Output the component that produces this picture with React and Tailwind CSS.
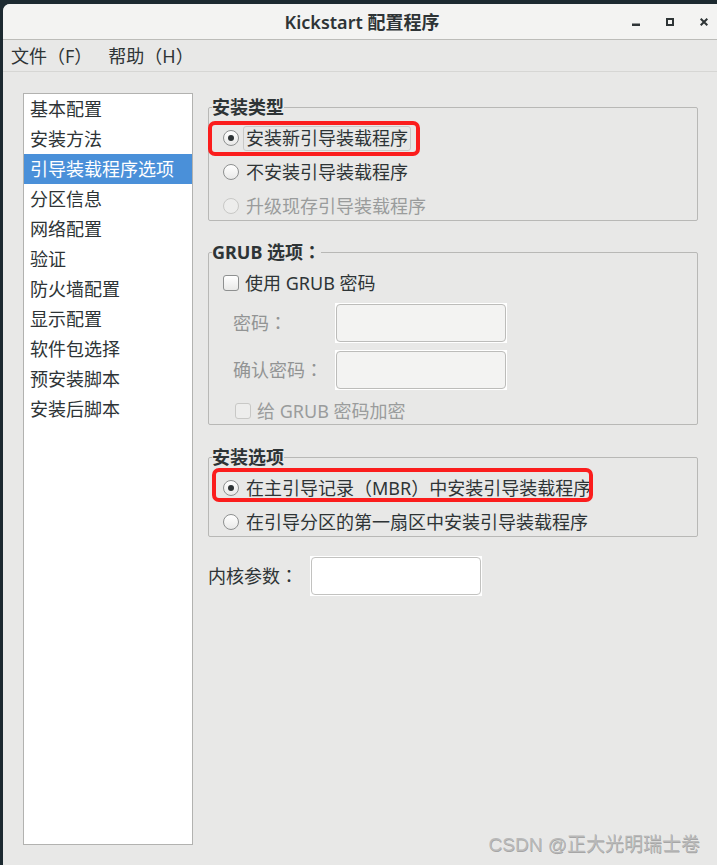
import React from "react";

const FONT = { fontFamily: '"Noto Sans", "Noto Sans CJK SC", sans-serif' };

function Colon() {
  return (
    <span style={{ fontFamily: '"Noto Sans CJK TC", sans-serif', lineHeight: 0 }}>：</span>
  );
}

function Radio({ checked, disabled }) {
  return (
    <span
      className={
        disabled
          ? "w-4 h-4 rounded-full border border-[#c8c8c6] bg-[#ededec] flex items-center justify-center shrink-0"
          : "w-4 h-4 rounded-full border border-[#8e9090] bg-linear-to-b from-[#ffffff] to-[#e9e9e8] flex items-center justify-center shrink-0"
      }
    >
      {checked && <span className="w-[6px] h-[6px] rounded-full bg-[#2e3436]" />}
    </span>
  );
}

function Check({ disabled }) {
  return (
    <span
      className={
        disabled
          ? "w-4 h-4 rounded-[3px] border border-[#c8c8c6] bg-[#ededec] shrink-0"
          : "w-4 h-4 rounded-[3px] border border-[#8e9090] bg-linear-to-b from-[#ffffff] to-[#e9e9e8] shrink-0"
      }
    />
  );
}

function RadioRow({ checked, disabled, focus, children }) {
  return (
    <div className="relative flex items-center h-[28px]">
      <Radio checked={checked} disabled={disabled} />
      <span
        className={
          focus
            ? "ml-[4px] px-[2px] leading-[23px] border border-[#c9c9c7] rounded-[3px] text-[#2e3436]"
            : disabled
            ? "ml-[4px] px-[2px] leading-[23px] border border-transparent text-[#9a9c9c]"
            : "ml-[4px] px-[2px] leading-[23px] border border-transparent text-[#2e3436]"
        }
      >
        {children}
      </span>
    </div>
  );
}

function Field({ legend, children, className }) {
  return (
    <fieldset className={"border border-[#b8b8b6] rounded-[2px] " + className}>
      <legend className="ml-[3px] font-bold text-[18px] leading-[24px] h-[24px] text-[#2e3436]">
        {legend}
      </legend>
      <div className="pl-[14px]">{children}</div>
    </fieldset>
  );
}

function TextBox({ white }) {
  return (
    <div className="w-[172px] h-[40px] bg-white p-px">
      <div
        className={
          white
            ? "h-full rounded-[4px] border border-[#c2c2c0] bg-white"
            : "h-full rounded-[4px] border border-[#bcbcba] bg-[#f3f3f2]"
        }
      />
    </div>
  );
}

const items = [
  "基本配置",
  "安装方法",
  "引导装载程序选项",
  "分区信息",
  "网络配置",
  "验证",
  "防火墙配置",
  "显示配置",
  "软件包选择",
  "预安装脚本",
  "安装后脚本",
];

export default function App() {
  return (
    <div
      className="relative w-[717px] h-[865px] bg-[#1c2930] pt-[4px] pl-[3px] overflow-hidden text-[18px] text-[#2e3436]"
      style={FONT}
    >
      <div className="flex flex-col h-full bg-[#e8e8e7] rounded-tl-[7px] overflow-hidden">
        {/* title bar */}
        <div className="h-[36px] shrink-0 bg-[#f3f3f2] border-b border-[#bcbcb9] grid grid-cols-[1fr_auto_1fr] items-center">
          <div />
          <div className="pl-[4px] font-semibold text-[18px] leading-[24px] text-[#2e3436]">
            Kickstart 配置程序
          </div>
          <div className="flex items-center justify-end gap-[26px] pr-[9px]">
            <svg width="8" height="8" viewBox="0 0 8 8">
              <rect x="0" y="5.5" width="8" height="2.5" fill="#2e3436" />
            </svg>
            <svg width="8" height="8" viewBox="0 0 8 8">
              <rect x="1" y="1" width="6" height="6" fill="none" stroke="#2e3436" strokeWidth="2" />
            </svg>
            <svg width="8" height="8" viewBox="0 0 8 8">
              <path d="M0.7 0.7 L7.3 7.3 M7.3 0.7 L0.7 7.3" stroke="#2e3436" strokeWidth="2" />
            </svg>
          </div>
        </div>

        {/* menu bar */}
        <div className="h-[32px] shrink-0 border-b border-[#d6d6d4] flex items-center pl-[8px] pt-[1px] gap-[16px] leading-[24px]">
          <span>文件（F）</span>
          <span>帮助（H）</span>
        </div>

        {/* body */}
        <div className="flex-1 min-h-0 flex pt-[21px] pb-[20px] pl-[20px]">
          <div className="w-[170px] h-full bg-white border border-[#b2b2b0] shrink-0">
            {items.map((t, i) => (
              <div
                key={t}
                className={
                  i === 2
                    ? "h-[30px] leading-[30px] pl-[6px] bg-[#4a90d9] text-white"
                    : "h-[30px] leading-[30px] pl-[6px] text-[#2e3436]"
                }
              >
                {t}
              </div>
            ))}
          </div>

          <div className="ml-[15px] w-[490px] mt-[2px] flex flex-col">
            <Field legend="安装类型" className="">
              <div className="pt-[5px] flex flex-col gap-[6px]">
                <RadioRow checked focus>
                  安装新引导装载程序
                  <span className="absolute left-[-15px] top-[-3px] w-[212px] h-[35px] border-[4px] border-[#fb1d1d] rounded-[7px]" />
                </RadioRow>
                <RadioRow>不安装引导装载程序</RadioRow>
                <RadioRow disabled>升级现存引导装载程序</RadioRow>
              </div>
            </Field>

            <Field
              legend={
                <>
                  GRUB 选项<Colon />
                </>
              }
              className="mt-[19px]"
            >
              <div className="pt-[5px] flex flex-col">
                <div className="flex items-center h-[28px]">
                  <Check />
                  <span className="ml-[6px] leading-[24px]">使用 GRUB 密码</span>
                </div>
                <div className="flex items-center h-[40px] mt-[6px]">
                  <span className="ml-[10px] w-[102px] h-[24px] text-[#929494] leading-[24px]">
                    密码<Colon />
                  </span>
                  <TextBox />
                </div>
                <div className="flex items-center h-[40px] mt-[7px]">
                  <span className="ml-[10px] w-[102px] h-[24px] text-[#929494] leading-[24px]">
                    确认密码<Colon />
                  </span>
                  <TextBox />
                </div>
                <div className="flex items-center h-[26px] mt-[8px] pl-[12px]">
                  <Check disabled />
                  <span className="ml-[6px] leading-[24px] text-[#9a9c9c]">给 GRUB 密码加密</span>
                </div>
              </div>
            </Field>

            <Field legend="安装选项" className="mt-[20px]">
              <div className="pt-[5px] flex flex-col gap-[6px]">
                <RadioRow checked>
                  在主引导记录（MBR）中安装引导装载程序
                  <span className="absolute left-[-11px] top-[-6px] w-[381px] h-[34px] border-[4px] border-[#fb1d1d] rounded-[7px]" />
                </RadioRow>
                <RadioRow>在引导分区的第一扇区中安装引导装载程序</RadioRow>
              </div>
            </Field>

            <div className="flex items-center h-[40px] mt-[19px]">
              <span className="w-[102px] h-[24px] leading-[24px]">
                内核参数<Colon />
              </span>
              <TextBox white />
            </div>
          </div>
        </div>
      </div>

      <div
        className="absolute right-[17px] bottom-[8px] text-[19px] leading-[24px] text-[#b9b9b9]"
        style={{
          fontFamily: '"Liberation Sans", "Noto Sans CJK SC", sans-serif',
          textShadow: "0.5px 0.5px 0.5px rgba(0,0,0,0.3)",
        }}
      >
        CSDN @正大光明瑞士卷
      </div>
    </div>
  );
}
